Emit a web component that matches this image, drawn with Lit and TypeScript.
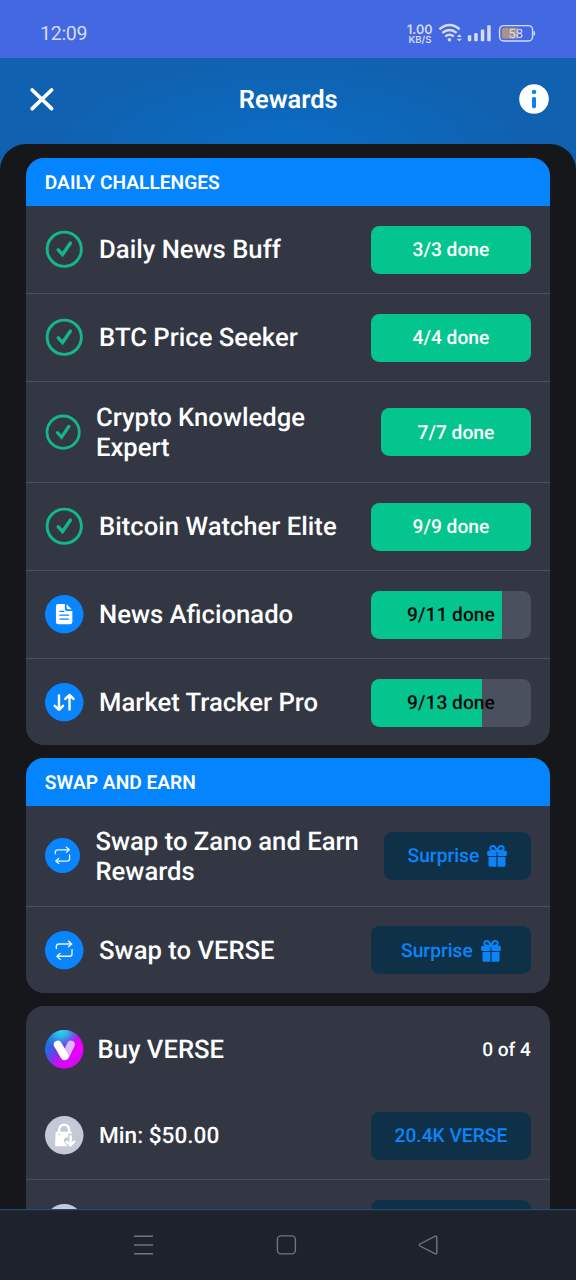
import { LitElement, html, css, svg, nothing } from "lit";
import { customElement, property } from "lit/decorators.js";
import { classMap } from "lit/directives/class-map.js";

type IconName = "check" | "news" | "market" | "swap" | "lock" | "verse";

interface Task {
  icon: IconName;
  title: string;
  done?: number;
  total?: number;
  reward?: string;
  gift?: boolean;
  size?: "narrow" | "compact";
  small?: boolean;
}

const daily: Task[] = [
  { icon: "check", title: "Daily News Buff", done: 3, total: 3 },
  { icon: "check", title: "BTC Price Seeker", done: 4, total: 4 },
  { icon: "check", title: "Crypto Knowledge Expert", done: 7, total: 7, size: "narrow" },
  { icon: "check", title: "Bitcoin Watcher Elite", done: 9, total: 9 },
  { icon: "news", title: "News Aficionado", done: 9, total: 11 },
  { icon: "market", title: "Market Tracker Pro", done: 9, total: 13 },
];

const swaps: Task[] = [
  { icon: "swap", title: "Swap to Zano and Earn Rewards", reward: "Surprise", gift: true, size: "compact" },
  { icon: "swap", title: "Swap to VERSE", reward: "Surprise", gift: true },
];

const purchases: Task[] = [
  { icon: "lock", title: "Min: $50.00", reward: "20.4K VERSE", small: true },
  { icon: "lock", title: "", reward: "", small: true },
];

const glyphs = {
  check: svg`
    <circle cx="19" cy="19" r="16.9" fill="none" stroke="#14b786" stroke-width="2.9"/>
    <path d="M13.1 19.6 L17.3 24.2 L25 13" fill="none" stroke="#14b786" stroke-width="3.4" stroke-linecap="round" stroke-linejoin="miter"/>`,
  news: svg`
    <circle cx="19" cy="19" r="19" fill="#0885ff"/>
    <path d="M13 9H19.6V13.8A2 2 0 0 0 21.6 15.8H27V26.6A2.2 2.2 0 0 1 24.8 28.8H13A2.2 2.2 0 0 1 10.8 26.6V11.2A2.2 2.2 0 0 1 13 9Z" fill="#fff"/>
    <path d="M21.3 9.2V12.6A1.5 1.5 0 0 0 22.8 14.1H26.4Z" fill="#fff"/>
    <path d="M14.8 16.2H18.6M14.8 19.9H23.2M14.8 23.8H23.2" stroke="#0885ff" stroke-width="1.4" stroke-linecap="round"/>`,
  market: svg`
    <circle cx="19" cy="19" r="19" fill="#0885ff"/>
    <path d="M13.8 12.2V26.2M9.6 22.6L13.8 26.4L17.8 22.6M24.2 26.2V12.2M20 15.7L24.2 11.8L28.2 15.7" fill="none" stroke="#fff" stroke-width="2.4" stroke-linecap="round" stroke-linejoin="round"/>`,
  swap: svg`
    <circle cx="19" cy="19" r="19" fill="#0885ff"/>
    <path d="M11.2 17.2V15.4A2.6 2.6 0 0 1 13.8 12.8H26.4M23.2 10L26.4 12.8L23.2 15.6M26.7 18.4V22.4A2.6 2.6 0 0 1 24.1 25H11.7M14.9 22.2L11.7 25L14.9 27.8" fill="none" stroke="#e9f4ff" stroke-width="1.4" stroke-linecap="round" stroke-linejoin="round"/>`,
  lock: svg`
    <circle cx="19" cy="19" r="19" fill="#c5c9d7"/>
    <path d="M14 17V13.6A4.9 4.9 0 0 1 23.8 13.6V17" fill="none" stroke="#fff" stroke-width="2.5"/>
    <path d="M11.6 15.6H25.4A1.2 1.2 0 0 1 26.6 16.8V18.2A2 2 0 0 0 22.8 18.8V21.8A2.8 2.8 0 0 0 19.4 26.2L22.3 29.8H11A1 1 0 0 1 10 28.8L10.4 16.8A1.2 1.2 0 0 1 11.6 15.6Z" fill="#fff"/>
    <circle cx="14.4" cy="18.2" r=".9" fill="#c5c9d7"/>
    <path d="M25.3 20V28.6M21.4 25.4L25.3 29L28.8 25.4" fill="none" stroke="#fff" stroke-width="2.5" stroke-linecap="round" stroke-linejoin="round"/>`,
  verse: svg`
    <defs>
      <linearGradient id="base" x1="0.05" y1="0.35" x2="0.8" y2="0.7">
        <stop offset="0" stop-color="#1473e0"/><stop offset=".42" stop-color="#7a35e6"/><stop offset=".85" stop-color="#e800fb"/>
      </linearGradient>
      <radialGradient id="glow" cx="0.42" cy="0" r="0.5">
        <stop offset="0" stop-color="#2fe0ea"/><stop offset=".4" stop-color="#27bfe8" stop-opacity=".85"/><stop offset="1" stop-color="#1d8fe8" stop-opacity="0"/>
      </radialGradient>
      <radialGradient id="pink" cx="0.55" cy="1" r="0.5">
        <stop offset="0" stop-color="#e000ff"/><stop offset=".5" stop-color="#d808f8" stop-opacity=".8"/><stop offset="1" stop-color="#c010f0" stop-opacity="0"/>
      </radialGradient>
    </defs>
    <circle cx="19" cy="19" r="19" fill="url(#base)"/>
    <circle cx="19" cy="19" r="19" fill="url(#pink)"/>
    <circle cx="19" cy="19" r="19" fill="url(#glow)"/>
    <path d="M20.3 25.4L25.6 14.3" stroke="#d9b9f8" stroke-width="7.6" stroke-linecap="round"/>
    <path d="M12.7 14.6L19.2 25.6" stroke="#fff" stroke-width="8" stroke-linecap="round"/>`,
};

@customElement("task-icon")
class TaskIcon extends LitElement {
  static styles = css`
    :host { display: block; flex: none; width: 38.5px; height: 38.5px; }
    .glyph { display: block; width: 100%; height: 100%; overflow: visible; }
  `;
  @property() name: IconName = "check";
  render() {
    return html`<svg class="glyph" viewBox="0 0 38 38">${glyphs[this.name]}</svg>`;
  }
}

@customElement("task-row")
class TaskRow extends LitElement {
  static styles = css`
    :host { display: block; border-bottom: 1px solid #4b4f5c; }
    :host(:last-child) { border-bottom: 0; }
    .row { display: flex; align-items: center; box-sizing: border-box; height: 87px; padding: .1px 19.5px 0 18.8px; }
    .row.tall { height: 100px; }
    .title { flex: 1; min-width: 0; margin-left: 16px; padding-top: 1.6px; font-size: 25.65px; font-weight: 550; line-height: 30px; color: #fff; }
    .small .title { font-size: 22.6px; padding-top: 0; }
    .narrow .icon { width: 36.3px; height: 36.3px; }
    .narrow .title { margin-left: 15px; padding-right: 20px; }
    .compact .icon { width: 35px; height: 35px; }
    .compact .title { margin-left: 15.9px; }
    .pill { flex: none; position: relative; display: flex; align-items: center; justify-content: center; width: 160px; height: 48px; border-radius: 8.5px; overflow: hidden; font-size: 19.2px; font-weight: 550; }
    .narrow .pill { width: 150px; }
    .compact .pill { width: 147px; }
    .progress { background: #4b505f; color: #04090c; }
    .full { color: #fff; }
    .fill { position: absolute; inset: 0 auto 0 0; background: #05c58e; }
    .label { position: relative; }
    .reward { background: #0f3147; color: #0b84fb; gap: 8px; }
    .gift { width: 20px; height: 22px; padding-top: 1px; }
  `;
  @property({ attribute: false }) task!: Task;

  private pill(t: Task) {
    if (t.total !== undefined && t.done !== undefined) {
      return html`<div class=${classMap({ pill: true, progress: true, full: t.done === t.total })}>
        <div class="fill" style="width:${(t.done / t.total) * 100}%"></div>
        <span class="label">${t.done}/${t.total} done</span>
      </div>`;
    }
    return html`<div class="pill reward">
      <span>${t.reward}</span>
      ${t.gift
        ? html`<svg class="gift" viewBox="0 0 20 22" fill="#0b84fb">
            <path d="M9.6 6C9 2.5 7.4 1.1 5.6 1.1C3.6 1.1 2.7 3 3.7 4.6C4.3 5.7 5.5 6 9.6 6ZM10.4 6C11 2.5 12.6 1.1 14.4 1.1C16.4 1.1 17.3 3 16.3 4.6C15.7 5.7 14.5 6 10.4 6Z" fill="none" stroke="#0b84fb" stroke-width="2"/>
            <path d="M1.5 5.8H9.5V11H1.5A1.3 1.3 0 0 1 .2 9.7V7.1A1.3 1.3 0 0 1 1.5 5.8ZM10.5 5.8H18.5A1.3 1.3 0 0 1 19.8 7.1V9.7A1.3 1.3 0 0 1 18.5 11H10.5Z"/>
            <path d="M1.5 12H9.4V21.8H3A1.5 1.5 0 0 1 1.5 20.3ZM10.6 12H18.5V20.3A1.5 1.5 0 0 1 17 21.8H10.6Z"/>
          </svg>`
        : nothing}
    </div>`;
  }

  render() {
    const t = this.task;
    const classes = {
      row: true,
      tall: !!t.size,
      narrow: t.size === "narrow",
      compact: t.size === "compact",
      small: !!t.small,
    };
    return html`<div class=${classMap(classes)}>
      <task-icon class="icon" name=${t.icon}></task-icon>
      <div class="title">${t.title}</div>
      ${this.pill(t)}
    </div>`;
  }
}

@customElement("app-root")
class AppRoot extends LitElement {
  static styles = css`
    :host { display: flex; flex-direction: column; width: 576px; height: 1280px; overflow: hidden; background: #15171b; font-family: Roboto, sans-serif; text-rendering: geometricPrecision; color: #fff; }
    .status { flex: none; display: flex; align-items: center; justify-content: space-between; box-sizing: border-box; height: 57.5px; padding: 9px 40px 0 40px; background: #4368e1; color: #d5dcfa; }
    .clock { font-size: 19.6px; line-height: 24px; letter-spacing: -0.3px; padding-top: 1px; }
    .indicators { display: block; width: 129px; height: 24px; }
    .rate { font-family: Inter, sans-serif; font-weight: 600; }
    .app { flex: 1; min-height: 0; display: flex; flex-direction: column; background: radial-gradient(ellipse 230px 90px at 50% 95px, #0a6cc6 0%, #0c68bc 45%, #1062b0 100%); background-size: 100% 130px; background-color: #1062b0; background-repeat: no-repeat; }
    .header { flex: none; display: grid; grid-template-columns: 30px 1fr 30px; align-items: center; height: 86.5px; padding: 0 26.6px 3px 27px; box-sizing: border-box; }
    .heading { text-align: center; padding-top: 1.4px; font-size: 25.5px; font-weight: 580; line-height: 30px; }
    .tool { display: block; width: 30px; height: 30px; }
    .sheet { flex: 1; min-height: 0; overflow: hidden; display: flex; flex-direction: column; gap: 13px; box-sizing: border-box; padding: 14.3px 25.6px 0 25.8px; border-radius: 26px 26px 0 0; background: #15171b; }
    .card { flex: none; overflow: hidden; border-radius: 18px; background: #323743; }
    .band { display: flex; align-items: center; height: 47.7px; padding-left: 19px; background: #0485ff; font-size: 19.2px; font-weight: 600; }
    .body { margin-bottom: -.8px; }
    .group { display: flex; align-items: center; height: 86px; padding: 0 19.5px 0 18.8px; }
    .name { flex: 1; margin-left: 14.4px; padding-top: 1.4px; font-size: 25.65px; font-weight: 550; line-height: 30px; }
    .count { font-size: 19.1px; font-weight: 550; }
    .nav { flex: none; display: block; width: 576px; height: 71px; }
  `;

  private card(title: string, tasks: Task[]) {
    return html`<section class="card">
      <div class="band">${title}</div>
      <div class="body">${tasks.map((t) => html`<task-row .task=${t}></task-row>`)}</div>
    </section>`;
  }

  render() {
    return html`
      <div class="status">
        <div class="clock">12:09</div>
        <svg class="indicators" viewBox="407 21 129 24" fill="#d5dcfa">
          <text class="rate" x="407" y="34" font-size="13" textLength="25.5" lengthAdjust="spacingAndGlyphs">1.00</text>
          <text class="rate" x="408.5" y="43" font-size="9.6" textLength="23" lengthAdjust="spacingAndGlyphs">KB/S</text>
          <g fill="none" stroke="#d5dcfa" stroke-width="2.4">
            <path d="M439.4 29.2Q449.5 21 459.6 29.2M442.3 32.9Q449.5 27 456.7 32.9M445.3 36.5Q449.5 33 453.7 36.5"/>
          </g>
          <circle cx="449.4" cy="39.8" r="1.8"/>
          <path d="M456.8 37L459.3 34.2L461.8 37ZM456.8 38.8L459.3 41.6L461.8 38.8Z"/>
          <rect x="467.8" y="35.2" width="3.5" height="6" rx="1"/>
          <rect x="474.2" y="33" width="3.5" height="8.2" rx="1"/>
          <rect x="480.8" y="29.4" width="3.5" height="11.8" rx="1"/>
          <rect x="487.2" y="25.2" width="3.5" height="16" rx="1"/>
          <rect x="499.6" y="25.6" width="33" height="15.4" rx="4.2" fill="none" stroke="#d5dcfa" stroke-width="1.4"/>
          <path d="M504 27.8H517.7V38.8H504A2.2 2.2 0 0 1 501.8 36.6V30A2.2 2.2 0 0 1 504 27.8Z" fill="#a99381"/>
          <path d="M533.6 31Q535 31 535 32.3V34.4Q535 35.7 533.6 35.7Z"/>
          <text x="508.6" y="38" font-size="13" textLength="14.5">58</text>
        </svg>
      </div>
      <div class="app">
        <header class="header">
          <svg class="tool" viewBox="0 0 30 30"><path d="M5.2 6L24.6 24.6M24.6 6L5.2 24.6" stroke="#fff" stroke-width="3.7" stroke-linecap="round"/></svg>
          <div class="heading">Rewards</div>
          <svg class="tool" viewBox="0 0 30 30"><circle cx="15" cy="15" r="14.8" fill="#fff"/><circle cx="15" cy="7.9" r="2.2" fill="#0c7ff0"/><rect x="13" y="13" width="4" height="11.2" rx="1.6" fill="#0c7ff0"/></svg>
        </header>
        <main class="sheet">
          ${this.card("DAILY CHALLENGES", daily)}
          ${this.card("SWAP AND EARN", swaps)}
          <section class="card">
            <div class="group">
              <task-icon name="verse"></task-icon>
              <div class="name">Buy VERSE</div>
              <div class="count">0 of 4</div>
            </div>
            ${purchases.map((t) => html`<task-row .task=${t}></task-row>`)}
          </section>
        </main>
      </div>
      <svg class="nav" viewBox="0 0 576 71">
        <rect width="576" height="71" fill="#1e222d"/>
        <rect width="576" height="1.2" fill="#244a77"/>
        <g fill="none" stroke="#717580" stroke-width="1.4">
          <path d="M134 27.2H153M134 36H153M134 44.7H153" stroke-width="1.6"/>
          <rect x="277.4" y="26.9" width="18" height="18" rx="3.6"/>
          <path d="M435.3 27.2Q436.8 26.8 436.8 28.4V43.6Q436.8 45.2 435.3 44.8L420 37Q418.4 36 420 35Z"/>
        </g>
      </svg>
    `;
  }
}
